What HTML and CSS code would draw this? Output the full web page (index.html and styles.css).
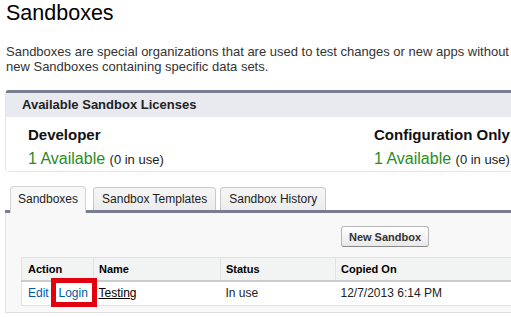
FILE: index.html
```html
<!DOCTYPE html>
<html>
<head>
<meta charset="utf-8">
<link rel="stylesheet" href="styles.css">
</head>
<body>
<div class="page">
  <h1 class="title">Sandboxes</h1>
  <p class="desc">Sandboxes are special organizations that are used to test changes or new apps without<br>new Sandboxes containing specific data sets.</p>

  <div class="licenses">
    <div class="lic-head">Available Sandbox Licenses</div>
    <div class="lic-body">
      <div class="lic">
        <div class="lic-name">Developer</div>
        <div class="lic-count"><span class="avail">1 Available</span> <span class="inuse">(0 in use)</span></div>
      </div>
      <div class="lic">
        <div class="lic-name">Configuration Only</div>
        <div class="lic-count"><span class="avail">1 Available</span> <span class="inuse">(0 in use)</span></div>
      </div>
    </div>
  </div>

  <div class="tabs">
    <div class="tab active">Sandboxes</div>
    <div class="tab wide">Sandbox Templates</div>
    <div class="tab">Sandbox History</div>
  </div>
  <div class="tab-panel">
    <div class="btn-row"><button class="btn">New Sandbox</button></div>
    <table class="list">
      <thead>
        <tr>
          <th class="c-action">Action</th>
          <th class="c-name">Name</th>
          <th class="c-status">Status</th>
          <th class="c-copied">Copied On</th>
        </tr>
      </thead>
      <tbody>
        <tr>
          <td><a class="link" href="#">Edit</a> <span class="hl">| <a class="link" href="#">Login</a></span></td>
          <td><a class="name-link" href="#">Testing</a></td>
          <td>In use</td>
          <td>12/7/2013 6:14 PM</td>
        </tr>
      </tbody>
    </table>
  </div>
</div>
</body>
</html>
```

FILE: styles.css
```css
html, body {
  margin: 0;
  padding: 0;
  overflow: hidden;
  background: #fff;
}
body {
  font-family: Arial, "Liberation Sans", sans-serif;
  color: #222;
}
.page {
  width: 780px;
  padding-left: 5px;
}
.title {
  margin: 0;
  font-size: 21.5px;
  line-height: 26px;
  font-weight: normal;
  color: #000;
  padding-left: 1px;
}
.desc {
  margin: 18px 0 0 1px;
  font-size: 13px;
  line-height: 15px;
  color: #333;
  white-space: nowrap;
}
.licenses {
  margin-top: 16px;
  border-top: 3px solid #787d92;
  border-left: 1px solid #e3e5e9;
  border-bottom: 1px solid #e3e5e9;
  border-radius: 4px 0 0 4px;
}
.lic-head {
  background: #e8eaef;
  height: 24px;
  line-height: 24px;
  font-size: 13px;
  font-weight: bold;
  padding-left: 16px;
  color: #222;
}
.lic-body {
  display: grid;
  grid-template-columns: 346px 1fr;
  padding: 9px 0 1px 22px;
  background: #fff;
}
.lic-name {
  font-size: 15px;
  line-height: 18px;
  font-weight: bold;
  color: #111;
}
.lic-count {
  margin-top: 5px;
  line-height: 20px;
}
.avail {
  font-size: 16px;
  color: #2a8c1e;
}
.inuse {
  font-size: 13px;
  color: #222;
}
.tabs {
  margin-top: 14px;
  display: flex;
  align-items: flex-end;
  padding-left: 5px;
  border-bottom: 3px solid #787d92;
}
.tab {
  font-size: 12px;
  line-height: 14px;
  padding: 4px 8px 4px;
  border: 1px solid #c9c9c9;
  border-bottom: none;
  border-radius: 4px 4px 0 0;
  background: linear-gradient(#f6f6f6, #ececec);
  color: #222;
  margin-right: 4px;
}
.tab.active {
  padding: 5px 7px 7px;
  margin-bottom: -3px;
  margin-right: 7px;
  background: #f8f8f8;
  border-color: #d5d5d5;
}
.tab-panel {
  background: #f8f8f8;
  border-left: 1px solid #e3e3e3;
  border-bottom: 1px solid #dedede;
  padding: 13px 0 6px 15px;
}
.btn-row {
  display: flex;
  justify-content: center;
  padding-right: 36px;
  margin-bottom: 10px;
}
.btn {
  font-family: Arial, "Liberation Sans", sans-serif;
  font-size: 11px;
  font-weight: bold;
  color: #333;
  height: 21px;
  width: 88px;
  padding: 0;
  border: 1px solid #b5b5b5;
  border-bottom-color: #8a8a8a;
  border-radius: 3px;
  background: linear-gradient(#ffffff, #e9e9e9);
}
.list {
  border-collapse: collapse;
  width: 100%;
  font-size: 12px;
  border-left: 1px solid #e0e3e5;
}
.list th {
  background: #f2f3f3;
  font-size: 11px;
  font-weight: bold;
  text-align: left;
  height: 23px;
  padding: 0 0 0 5px;
  border-top: 1px solid #e0e3e5;
  border-left: 1px solid #e0e3e5;
  border-bottom: 2px solid #cccccc;
  color: #000;
  box-sizing: border-box;
}
.list th.c-action { border-left: none; padding-left: 6px; width: 72px; }
.list th.c-name { width: 127px; }
.list th.c-status { width: 115px; }
.list td {
  background: #fff;
  height: 23px;
  padding: 0 0 0 6px;
  border-bottom: 1px solid #e3e3e3;
  color: #222;
}
.list td + td { padding-left: 5px; }
.link {
  color: #015ba7;
  text-decoration: none;
}
.name-link {
  color: #000;
  text-decoration: underline;
}
.hl {
  position: relative;
  color: #015ba7;
}
.hl::after {
  content: "";
  position: absolute;
  left: -1px;
  right: -9px;
  top: -8px;
  bottom: -7px;
  border: 5px solid #e3000f;
}
```
